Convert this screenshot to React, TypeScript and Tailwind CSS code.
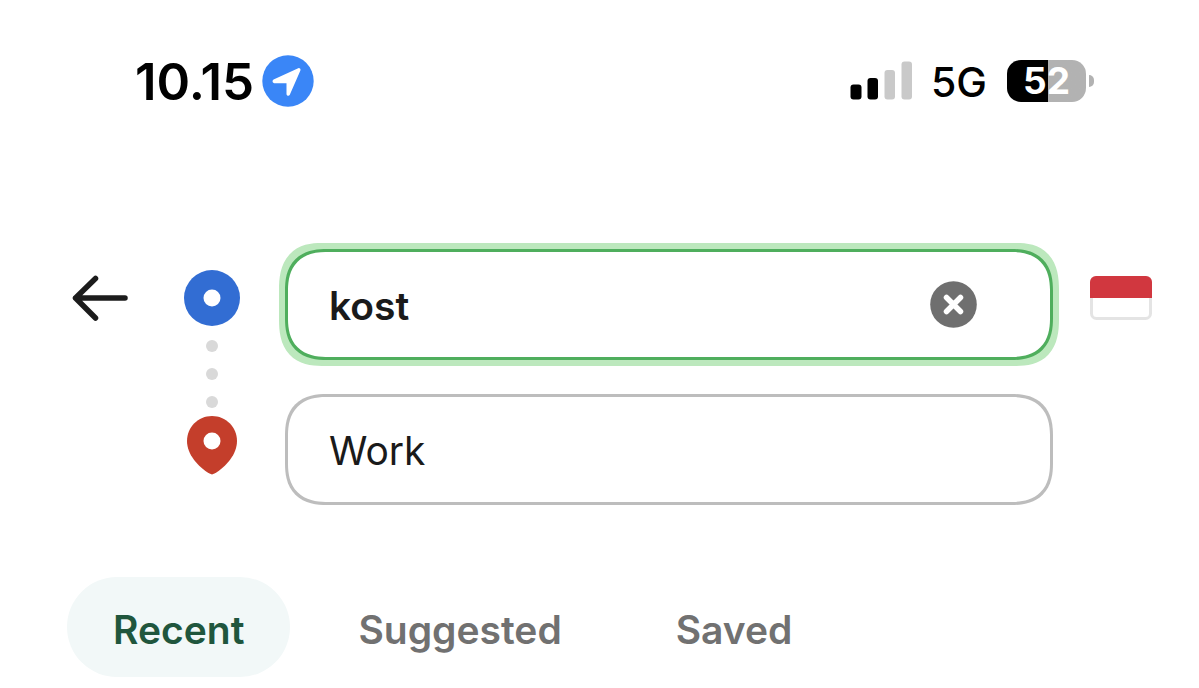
import { useRef, useState } from 'react'
import clsx from 'clsx'

const TABS = ['Recent', 'Suggested', 'Saved']

function StatusBar() {
  return (
    <header className="flex h-14 items-center justify-between pl-[135px] pr-[105px] text-black">
      <div className="flex items-center gap-2">
        <span className="pt-[2px] text-[51px] leading-14 font-semibold">10.15</span>
        <svg className="size-[52px]" viewBox="0 0 52 52" aria-label="Location in use">
          <circle cx="26" cy="26" r="25.7" fill="#3a86f7" />
          <path
            d="M11.600 24.600 36.200 13.200a1.700 1.700 0 0 1 2.200 2.200L27.800 39.800c-.8 1.700-3.300 1.100-3.300-.8V28.200H12.300c-1.900-.1-2.400-2.700-.7-3.600Z"
            fill="#fff"
          />
        </svg>
      </div>

      <div className="flex items-center">
        <svg className="h-10 w-[62px]" viewBox="0 0 62 40" aria-label="Signal strength">
          <rect x="0.500" y="23.500" width="11" height="15" rx="3" fill="#000" />
          <rect x="17.500" y="17" width="10.500" height="21.500" rx="3" fill="#000" />
          <rect x="34.500" y="9" width="10.500" height="29.500" rx="3" fill="#c9c9c9" />
          <rect x="51.500" y="0.500" width="10.500" height="38" rx="3" fill="#c9c9c9" />
        </svg>
        <span className="ml-[19px] pt-[2px] text-[41px] leading-14 font-medium">5G</span>
        <div className="ml-5 flex items-center gap-[3px]">
          <div className="flex h-[42px] w-[79px] items-center justify-center rounded-[14px] bg-linear-to-r from-black from-52% to-[#b2b2b2] to-52% text-[37px] leading-10 font-bold text-white">
            52
          </div>
          <div className="h-3 w-[5px] rounded-r-full bg-[#b2b2b2]" />
        </div>
      </div>
    </header>
  )
}

function RouteMarkers() {
  return (
    <div className="flex w-14 shrink-0 flex-col items-center">
      <svg className="size-14" viewBox="0 0 56 56" aria-hidden="true">
        <circle cx="28" cy="28" r="28" fill="#326dd3" />
        <circle cx="28" cy="28" r="8.500" fill="#fff" />
      </svg>
      <div className="mt-[14px] mb-2 flex flex-col gap-4">
        <span className="size-3 rounded-full bg-[#d9d9d9]" />
        <span className="size-3 rounded-full bg-[#d9d9d9]" />
        <span className="size-3 rounded-full bg-[#d9d9d9]" />
      </div>
      <svg className="h-[59px] w-[50px]" viewBox="0 0 50 59" aria-hidden="true">
        <path
          d="M25 0C11.200 0 0 11 0 25c0 13 10.500 25.500 22.500 32.600 1.900 1.100 3.100 1.100 5 0C39.500 50.500 50 38 50 25 50 11 38.800 0 25 0Z"
          fill="#c43e2b"
        />
        <circle cx="25" cy="25" r="8.500" fill="#fff" />
      </svg>
    </div>
  )
}

const fieldClass =
  'h-[111px] w-full rounded-[42px] border-[3px] bg-white pt-[2px] pl-[41px] text-[39px] text-[#1a1a1a] outline-none [corner-shape:superellipse(1.3)]'

export default function App() {
  const [origin, setOrigin] = useState('kost')
  const [destination, setDestination] = useState('Work')
  const [tab, setTab] = useState('Recent')
  const originRef = useRef<HTMLInputElement>(null)

  const clearOrigin = () => {
    setOrigin('')
    originRef.current?.focus()
  }

  return (
    <main className="bg-white pt-[53px] pb-[11px] font-['Inter',sans-serif]">
      <StatusBar />

      <section className="mt-[140px] flex items-start pr-[47px] pl-[72px]">
        <div className="flex pt-[21px]">
          <button type="button" aria-label="Back" className="mr-14 size-14 cursor-pointer">
            <svg
              className="size-14"
              viewBox="0 0 56 56"
              fill="none"
              stroke="#1c1c1c"
              strokeWidth="5.500"
              strokeLinecap="round"
              strokeLinejoin="round"
            >
              <path d="M53 28H3.500M23.500 8.500 3.500 28l20 20" />
            </svg>
          </button>
          <RouteMarkers />
        </div>

        <div className="ml-[45px] flex flex-1 flex-col gap-[34px]">
          <div className="relative">
            <input
              ref={originRef}
              aria-label="Pickup location"
              value={origin}
              onChange={(e) => setOrigin(e.target.value)}
              className={clsx(fieldClass, 'border-[#4fae5d] pr-32 font-semibold ring-6 ring-[#bce8bd]')}
            />
            <button
              type="button"
              aria-label="Clear"
              onClick={clearOrigin}
              className="absolute inset-y-0 right-[76px] my-auto size-[47px] cursor-pointer"
            >
              <svg viewBox="0 0 47 47" fill="none">
                <circle cx="23.500" cy="23.500" r="23.300" fill="#6f6f6f" />
                <path d="m16.500 16.500 14 14m0-14-14 14" stroke="#fff" strokeWidth="5.500" strokeLinecap="round" />
              </svg>
            </button>
          </div>
          <input
            aria-label="Destination"
            value={destination}
            onChange={(e) => setDestination(e.target.value)}
            className={clsx(fieldClass, 'border-[#bdbdbd] pr-10')}
          />
        </div>

        <button type="button" aria-label="Country: Indonesia" className="mt-[27px] ml-[37px] h-11 w-[62px] cursor-pointer">
          <svg viewBox="0 0 62 44">
            <rect x="1.500" y="1.500" width="59" height="41" rx="5" fill="#fff" stroke="#e4e4e4" strokeWidth="3" />
            <path d="M0 22V6a6 6 0 0 1 6-6h50a6 6 0 0 1 6 6v16Z" fill="#d1373f" />
          </svg>
        </button>
      </section>

      <nav className="mt-[72px] flex gap-[22px] pl-[67px]">
        {TABS.map((name) => (
          <button
            key={name}
            type="button"
            aria-pressed={tab === name}
            onClick={() => setTab(name)}
            className={clsx(
              'h-[100px] cursor-pointer rounded-full px-[46px] pt-[6px] text-[39px] font-semibold',
              tab === name ? 'bg-[#f2f8f8] text-[#20563d]' : 'text-[#717171]'
            )}
          >
            {name}
          </button>
        ))}
      </nav>
    </main>
  )
}
